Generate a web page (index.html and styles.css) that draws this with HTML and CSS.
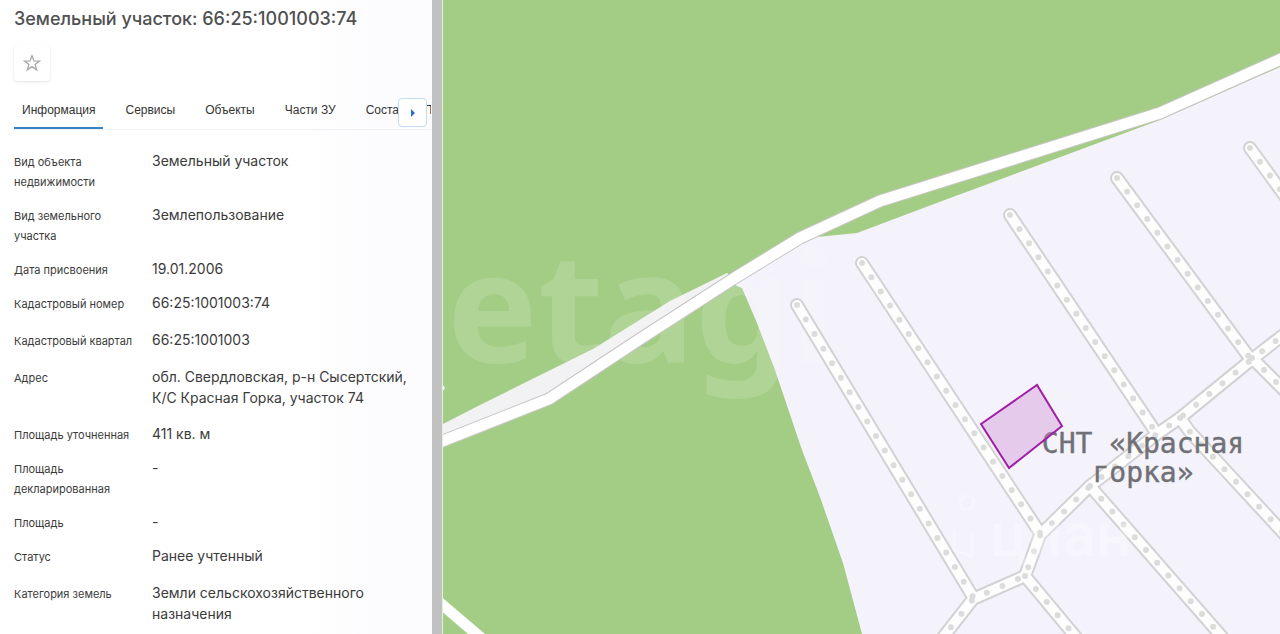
FILE: index.html
```html
<!DOCTYPE html>
<html lang="ru">
<head>
<meta charset="utf-8">
<meta name="viewport" content="width=device-width, initial-scale=1">
<title>Земельный участок: 66:25:1001003:74</title>
<link rel="stylesheet" href="styles.css">
</head>
<body>
<div class="layout">
  <main class="panel">
    <h1 class="title">Земельный участок: 66:25:1001003:74</h1>
    <button class="favorite" type="button" aria-label="В избранное">
      <svg width="18" height="18" viewBox="0 0 18 18" fill="none" stroke="#a9a9a9" stroke-width="1.3" stroke-linejoin="miter"><path d="M9 1.6 10.9 6.9 16.5 7 12.1 10.4 13.7 15.9 9 12.6 4.3 15.9 5.9 10.4 1.5 7 7.1 6.9Z"/></svg>
    </button>
    <nav class="tabs">
      <a class="tab active" href="#info">Информация</a>
      <a class="tab" href="#services">Сервисы</a>
      <a class="tab" href="#objects">Объекты</a>
      <a class="tab" href="#parts">Части ЗУ</a>
      <a class="tab" href="#content">Состав ЕЗП</a>
      <button class="next" type="button" aria-label="Следующие вкладки">
        <svg width="6" height="8" viewBox="0 0 6 8"><path d="M1 0 5 4 1 8Z" fill="#2b6fcb"/></svg>
      </button>
    </nav>
    <dl class="facts" id="info">
      <div class="row"><dt>Вид объекта недвижимости</dt><dd>Земельный участок</dd></div>
      <div class="row"><dt>Вид земельного участка</dt><dd>Землепользование</dd></div>
      <div class="row"><dt>Дата присвоения</dt><dd>19.01.2006</dd></div>
      <div class="row loose"><dt>Кадастровый номер</dt><dd>66:25:1001003:74</dd></div>
      <div class="row loose"><dt>Кадастровый квартал</dt><dd>66:25:1001003</dd></div>
      <div class="row loose"><dt>Адрес</dt><dd>обл. Свердловская, р-н Сысертский, К/С Красная Горка, участок 74</dd></div>
      <div class="row"><dt>Площадь уточненная</dt><dd>411 кв. м</dd></div>
      <div class="row"><dt>Площадь декларированная</dt><dd>-</dd></div>
      <div class="row"><dt>Площадь</dt><dd>-</dd></div>
      <div class="row loose"><dt>Статус</dt><dd>Ранее учтенный</dd></div>
      <div class="row"><dt>Категория земель</dt><dd>Земли сельскохозяйственного назначения</dd></div>
    </dl>
  </main>
  <div class="divider"></div>
  <section class="map" aria-label="Карта">
    <svg class="map-canvas" viewBox="443 0 837 634" preserveAspectRatio="xMinYMin slice">
      <defs>
        <path id="highway" d="M430 446 549 399 640 339 733 279 800 238 880 201 1160 113 1290 55"/>
        <path id="track" d="M425 590 500 654"/>
        <g id="lanes">
          <path d="M797 305 973 597"/>
          <path d="M862 263 1040 533"/>
          <path d="M1010 215 1157 434"/>
          <path d="M1117 178 1252 361"/>
          <path d="M1250 148 1300 217"/>
          <path d="M930 654 973 599 1025 576 1040 535 1090 486 1157 434 1180 418 1251 360 1300 322"/>
          <path d="M1180 418 1190 432 1300 551"/>
          <path d="M1252 358 1300 406"/>
          <path d="M1090 486 1237 654"/>
          <path d="M1025 576 1090 654"/>
        </g>
      </defs>
      <rect class="forest" x="443" width="2000" height="2000"/>
      <path class="land" d="M735 285 742 288 757 323 775 370 802 450 820 497 843 563 862 634V660H1400V14L1280 67 1160 120 980 187 950 198 857 233 817 237 790 246Z"/>
      <path class="verge" d="M443 424 480 405 593 349 670 301 727 273 733 279 549 399 443 441Z"/>
      <path class="land" d="M443 385 445 388 443 391Z"/>
      <text class="brand" x="447" y="362">etagi</text>
      <use class="road-edge" href="#highway"/>
      <use class="road" href="#highway"/>
      <use class="road" href="#track"/>
      <use class="lane-edge" href="#lanes"/>
      <use class="lane" href="#lanes"/>
      <use class="lane-dots" href="#lanes"/>
      <g class="pin"><circle cx="967" cy="503" r="7"/><path d="M954 530V550L972 556V532"/></g>
      <text class="stamp" x="990" y="556">циан</text>
      <text class="place" x="1143" y="453">СНТ «Красная</text>
      <text class="place" x="1143" y="482">горка»</text>
      <path class="parcel" d="M981 424 1037 385 1062 426 1009 468Z"/>
    </svg>
  </section>
</div>
</body>
</html>
```
FILE: styles.css
```css
* { box-sizing: border-box; }

body {
  margin: 0;
  font-family: Inter, "Liberation Sans", sans-serif;
  color: #3b3b3b;
  background: #fff;
}

.layout {
  display: grid;
  grid-template-columns: 432px 11px minmax(0, 1fr);
  height: 100vh;
  overflow: hidden;
}

.panel {
  padding: 7px 1px 0 14px;
  overflow: hidden;
  background: linear-gradient(90deg, #fff 70%, #fcfcfe 85%);
}

.title {
  margin: 0;
  font-size: 18px;
  font-weight: 500;
  line-height: 24px;
  color: #505050;
}

.favorite {
  display: grid;
  place-items: center;
  width: 36px;
  height: 36px;
  margin: 14px 0 0;
  padding: 0;
  border: 0;
  border-radius: 4px;
  background: #fff;
  box-shadow: 0 1px 3px rgba(0, 0, 0, 0.12);
}

.tabs {
  position: relative;
  display: flex;
  gap: 14px;
  margin-top: 11px;
  border-bottom: 1px solid #eff1f6;
  overflow: hidden;
}

.tab {
  flex: none;
  padding: 9px 8px 8px;
  border-bottom: 2px solid transparent;
  font-family: "Liberation Sans", sans-serif;
  font-size: 12px;
  line-height: 18px;
  color: #333;
  text-decoration: none;
}

.tab.active { border-bottom-color: #3583c6; }

.next {
  position: absolute;
  top: 6px;
  right: 4px;
  display: grid;
  place-items: center;
  width: 29px;
  height: 29px;
  padding: 0;
  border: 1px solid #c5ddf3;
  border-radius: 4px;
  background: #fff;
}

.facts { margin: 20px 0 0; }

.row {
  display: grid;
  grid-template-columns: 122px minmax(0, 1fr);
  column-gap: 16px;
  padding-bottom: 12px;
}

.row.loose { padding-bottom: 15px; }

dt {
  padding-top: 2px;
  font-size: 11px;
  line-height: 20px;
}

dd {
  margin: 0;
  padding-right: 12px;
  font-size: 14px;
  line-height: 21px;
}

.divider {
  background: #c1c1c1;
  border-right: 1px solid #e6eede;
}

.map { overflow: hidden; }

.map-canvas {
  display: block;
  width: 100%;
  height: 100%;
}

.forest { fill: #a3cd85; }
.land { fill: #f4f3fb; }
.verge { fill: #f2f1f3; }

.road, .road-edge, .lane, .lane-edge, .lane-dots {
  fill: none;
  stroke-linejoin: round;
  stroke-linecap: round;
}

.road-edge { stroke: #c9c5c5; stroke-width: 13px; }
.road { stroke: #fff; stroke-width: 11px; }
.lane-edge { stroke: #d3d1d3; stroke-width: 14px; }
.lane { stroke: #fdfdfd; stroke-width: 10px; }
.lane-dots { stroke: #dcdcdc; stroke-width: 6px; stroke-dasharray: 0 17; }

.brand {
  font: bold 152px "Noto Sans", sans-serif;
  fill: #fff;
  opacity: 0.14;
}

.stamp {
  font: 500 62px Roboto, sans-serif;
  fill: #fff;
  opacity: 0.25;
}

.pin { fill: none; stroke: #fff; stroke-width: 3px; opacity: 0.25; }

.place {
  font: 28px "DejaVu Sans Mono", monospace;
  fill: #707076;
  stroke: #707076;
  stroke-width: 0.4px;
  text-anchor: middle;
}

.parcel {
  fill: rgba(209, 140, 214, 0.4);
  stroke: #a01ea6;
  stroke-width: 2px;
}
```
